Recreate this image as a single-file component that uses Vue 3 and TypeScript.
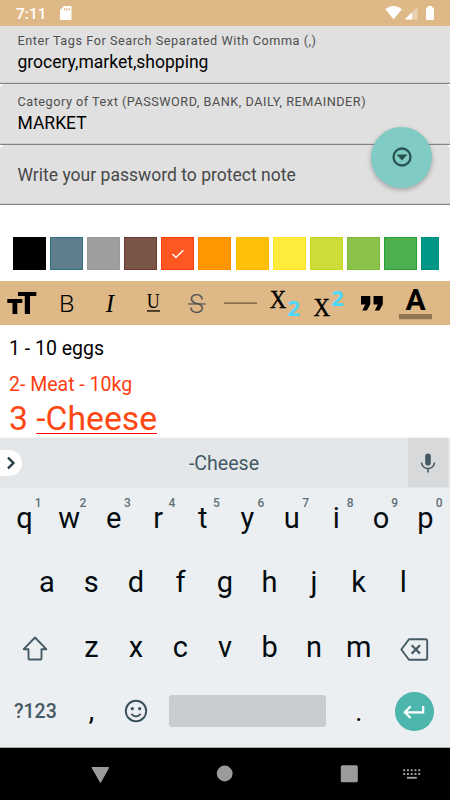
<script setup lang="ts">
interface Swatch { color: string; edge: string; selected?: boolean }

const swatches: Swatch[] = [
  { color: '#000000', edge: '#000000' },
  { color: '#607d8b', edge: '#2f6f82' },
  { color: '#9e9e9e', edge: '#989898' },
  { color: '#795548', edge: '#6b3a30' },
  { color: '#ff5722', edge: '#ff3a0c', selected: true },
  { color: '#ff9800', edge: '#ff8c00' },
  { color: '#ffc107', edge: '#ffb700' },
  { color: '#ffeb3b', edge: '#ffe524' },
  { color: '#cddc39', edge: '#c2d822' },
  { color: '#8bc34a', edge: '#7aba35' },
  { color: '#4caf50', edge: '#27a038' },
  { color: '#009688', edge: '#008c7c' },
]

const topRow = 'qwertyuiop'.split('').map((letter, i) => ({ letter, digit: (i + 1) % 10 }))
const homeRow = 'asdfghjkl'.split('')
const lowerRow = 'zxcvbnm'.split('')
</script>

<template>
  <div class="screen">
    <header class="status">
      <span class="clock">7:11</span>
      <svg class="sd" width="12" height="14" viewBox="0 0 12 14">
        <path fill="#fff" d="M4 0h6.2q1.3 0 1.3 1.3v11.4q0 1.3-1.3 1.3H1.3Q0 14 0 12.700V4z" />
        <path stroke="#deb887" stroke-width="1.100" d="M4.700 2v2.600M7 2v2.600M9.300 2v2.600" />
      </svg>
      <svg class="signals" width="50" height="14" viewBox="385 6 50 14">
        <path fill="#fff" d="M385.200 9.200Q393.500 2.800 402 9.200L393.600 19.300z" />
        <path fill="#fff" opacity=".35" d="M417.700 6.800v12.700h-12.900z" />
        <path fill="#fff" d="M412 12.300v7.200h-7.200z" />
        <path fill="#fff" d="M426 8.200q0-.8.800-.8H428V6h4v1.400h1.200q.8 0 .8.800v11q0 .8-.8.800h-6.400q-.8 0-.8-.8z" />
      </svg>
    </header>

    <section class="fields">
      <div class="field first">
        <label class="label tags">Enter Tags For Search Separated With Comma (,)</label>
        <div class="value">grocery,market,shopping</div>
      </div>
      <div class="field">
        <label class="label category">Category of Text (PASSWORD, BANK, DAILY, REMAINDER)</label>
        <div class="value market">MARKET</div>
      </div>
      <div class="field last">
        <div class="placeholder">Write your password to protect note</div>
      </div>
      <button class="fab" aria-label="Collapse">
        <svg width="22" height="22" viewBox="0 0 22 22">
          <circle cx="11" cy="11" r="8.500" fill="none" stroke="#28544f" stroke-width="2.300" />
          <path fill="#28544f" d="M5.500 8.600h11L11 14.600z" />
        </svg>
      </button>
    </section>

    <section class="palette">
      <div
        v-for="s in swatches"
        :key="s.color"
        class="swatch"
        :style="{ backgroundColor: s.color, borderColor: s.edge }"
      >
        <svg v-if="s.selected" width="14" height="12" viewBox="0 0 14 12">
          <path fill="none" stroke="#fff" stroke-width="1.400" d="M1.500 6L5 9.500L12.300 2.200" />
        </svg>
      </div>
    </section>

    <nav class="toolbar">
      <svg class="tool" viewBox="0 281 44 44">
        <path d="M18 292h18.300v4H30v18h-5.200v-18H18zM7.300 299h15v4h-5v11h-4.800v-11H7.300z" />
      </svg>
      <svg class="tool" viewBox="44 281 44 44">
        <text class="light" x="66.700" y="312" font-size="23" textLength="15.500" lengthAdjust="spacingAndGlyphs">B</text>
      </svg>
      <svg class="tool" viewBox="88 281 44 44">
        <text class="serif italic" x="110" y="311.700" font-size="25">I</text>
      </svg>
      <svg class="tool narrow" viewBox="132 281 43 44">
        <text class="serif" x="153.300" y="308.300" font-size="20" textLength="13" lengthAdjust="spacingAndGlyphs">U</text>
        <path d="M147 310.300h13v1.300h-13z" />
      </svg>
      <svg class="tool narrow muted" viewBox="175 281 43 44">
        <text class="light" x="196.300" y="312.500" font-size="25">S</text>
        <path d="M188 303.300h17.500v1.300H188z" />
      </svg>
      <svg class="tool" viewBox="218 281 44 44">
        <path fill="#6d5437" d="M224 302.500h33v1.300h-33z" />
      </svg>
      <svg class="tool" viewBox="262 281 44 44">
        <text class="serif bolder" x="278" y="307.500" font-size="26" textLength="16.500" lengthAdjust="spacingAndGlyphs">X</text>
        <text class="digit" x="293.700" y="316.200" font-size="22">2</text>
      </svg>
      <svg class="tool" viewBox="306 281 44 44">
        <text class="serif bolder" x="321.800" y="316.200" font-size="26" textLength="16.500" lengthAdjust="spacingAndGlyphs">X</text>
        <text class="digit" x="337.600" y="305.800" font-size="22">2</text>
      </svg>
      <svg class="tool" viewBox="350 281 44 44">
        <path d="M361 296h9.300v8.300l-3.500 6.300h-4.500l3-6H361zM373.500 296h9.300v8.300l-3.500 6.300h-4.500l3-6h-4.300z" />
      </svg>
      <svg class="tool" viewBox="394 281 44 44">
        <text class="bold" x="415.500" y="310.300" font-size="30">A</text>
        <path fill="#907750" d="M399 314h33v5.300h-33z" />
      </svg>
    </nav>

    <main class="editor">
      <p class="line">1 - 10 eggs</p>
      <p class="line second">2- Meat - 10kg</p>
      <p class="line big">3 <span class="under">-Cheese</span></p>
    </main>

    <section class="keyboard">
      <div class="suggestions">
        <div class="expand">
          <svg width="10" height="14" viewBox="0 0 10 14">
            <path fill="none" stroke="#263c46" stroke-width="2.400" d="M2 1.700L7.400 7L2 12.300" />
          </svg>
        </div>
        <span class="suggestion">-Cheese</span>
        <div class="mic">
          <svg width="16" height="20" viewBox="0 0 16 20">
            <rect x="5.200" y=".5" width="5.600" height="12" rx="2.800" fill="#455a64" />
            <path fill="none" stroke="#455a64" stroke-width="1.600" d="M1.500 9.500a6.500 6 0 0 0 13 0M8 15.500v4" />
          </svg>
        </div>
      </div>

      <div class="row r1">
        <div v-for="k in topRow" :key="k.letter" class="key">
          {{ k.letter }}<sup class="hint">{{ k.digit }}</sup>
        </div>
      </div>
      <div class="row r2">
        <div v-for="k in homeRow" :key="k" class="key">{{ k }}</div>
      </div>
      <div class="row r3">
        <div class="wide shift">
          <svg width="26" height="25" viewBox="0 0 26 25">
            <path fill="none" stroke="#455a64" stroke-width="1.900" stroke-linejoin="round" d="M13 1.500L24.300 13.200H19.500V22.600q0 .9-.9.900H7.400q-.9 0-.9-.9V13.200H1.700z" />
          </svg>
        </div>
        <div v-for="k in lowerRow" :key="k" class="key">{{ k }}</div>
        <div class="wide">
          <svg class="erase" width="29" height="23" viewBox="0 0 29 23">
            <path fill="none" stroke="#455a64" stroke-width="1.900" stroke-linejoin="round" d="M9 1.300h16.500q1.700 0 1.700 1.700v17q0 1.700-1.700 1.700H9L1.300 11.500z" />
            <path stroke="#455a64" stroke-width="2.200" d="M11.700 7.300l8.300 8.300M20 7.300l-8.300 8.300" />
          </svg>
        </div>
      </div>
      <div class="row r4">
        <div class="symbols">?123</div>
        <div class="comma">,</div>
        <div class="emoji">
          <svg width="24" height="24" viewBox="0 0 24 24">
            <circle cx="12" cy="12" r="10.200" fill="none" stroke="#37505b" stroke-width="1.900" />
            <circle cx="8.300" cy="9.700" r="1.600" fill="#37505b" />
            <circle cx="15.700" cy="9.700" r="1.600" fill="#37505b" />
            <path fill="none" stroke="#37505b" stroke-width="1.800" d="M7.300 14.800q4.700 5 9.400 0" />
          </svg>
        </div>
        <div class="space"></div>
        <div class="period">.</div>
        <div class="enter">
          <svg width="22" height="14" viewBox="0 0 22 14">
            <path fill="none" stroke="#fff" stroke-width="2.200" d="M20.200 1v6.300H2M7.600 1.300L1.800 7.200l5.800 5.800" />
          </svg>
        </div>
      </div>
    </section>

    <footer class="navbar">
      <svg width="450" height="52" viewBox="0 748 450 52" fill="#9b9b9b">
        <path stroke="#9b9b9b" stroke-linejoin="round" d="M92 767.500h16.700L100.500 782.500z" />
        <circle cx="224.700" cy="773.500" r="7.900" />
        <rect x="340.800" y="765.200" width="17" height="17" rx="1.500" />
        <path stroke="#9b9b9b" stroke-width="2" stroke-dasharray="2 1.750" d="M403.200 770.200h17.300M403.200 773.900h17.300" />
        <path d="M407 776.800h9.800v2H407z" />
      </svg>
    </footer>
  </div>
</template>

<style>
body { margin: 0; }
</style>

<style scoped>
.screen {
  width: 450px;
  height: 800px;
  display: flex;
  flex-direction: column;
  overflow: hidden;
  background: #fff;
  color: #000;
  font-family: Roboto, "Liberation Sans", sans-serif;
}
.screen * { box-sizing: border-box; }
svg { display: block; flex: none; }

.status {
  height: 26px;
  flex: none;
  display: flex;
  align-items: center;
  padding: 0 15px 0 16px;
  background: #deb887;
  color: #fff;
}
.clock { width: 43.500px; font-size: 15.500px; font-weight: 500; line-height: 20px; padding-top: 2px; }
.signals { margin-left: auto; }

.fields { position: relative; height: 179px; flex: none; display: flex; flex-direction: column; }
.field {
  height: 61px;
  padding: 10px 17.500px 0;
  background: #e0e0e0;
  border-bottom: 1px solid #848484;
  box-shadow: inset 0 -1px 0 #cecece;
  border-radius: 5px 5px 0 0;
}
.field.first { height: 58px; padding-top: 7px; border-radius: 0; }
.field.last { height: 60px; }
.label { display: block; font-size: 12.700px; line-height: 16px; color: #4f4f4f; white-space: nowrap; }
.label.tags { letter-spacing: .53px; }
.label.category { letter-spacing: .51px; }
.value { font-size: 17.500px; line-height: 22px; margin-top: 2px; }
.placeholder { font-size: 17.550px; line-height: 22px; padding-top: 9px; color: #484848; }
.fab {
  position: absolute;
  left: 371px;
  top: 101px;
  width: 61px;
  height: 61px;
  padding: 0;
  border: 0;
  border-radius: 50%;
  display: flex;
  align-items: center;
  justify-content: center;
  background: #80cbc4;
  box-shadow: 0 2px 5px rgba(0, 0, 0, .28);
}
.fab svg { margin-top: -1px; }

.palette {
  height: 76px;
  flex: none;
  display: flex;
  gap: 4.100px;
  margin: 0 11px 0 13px;
  padding-top: 32px;
  overflow: hidden;
}
.swatch {
  width: 33px;
  height: 33px;
  flex: none;
  border: 1px solid;
  display: flex;
  align-items: center;
  justify-content: center;
}

.toolbar { height: 44px; flex: none; display: flex; background: #deb887; }
.tool { width: 44px; height: 44px; overflow: visible; }
.narrow { width: 43px; }
.muted { fill: #555; }
.tool text { text-anchor: middle; }
.light { font-family: Roboto, sans-serif; font-weight: 300; }
.bold { font-family: Roboto, sans-serif; font-weight: 700; }
.italic { font-style: italic; }
.serif { font-family: "Liberation Serif", serif; }
.bolder { stroke: #000; stroke-width: .4px; }
.digit { font-family: "Noto Sans", sans-serif; font-weight: 700; fill: #4dd8ff; }

.editor { height: 113px; flex: none; padding: 12px 9px 0; }
.line { margin: 0; font-size: 19.500px; line-height: 24px; }
.second { margin-top: 12px; color: #ff3d10; }
.big { font-size: 33.700px; line-height: 40px; margin-top: 2px; color: #ff4712; white-space: nowrap; }
.under { text-decoration: underline; text-decoration-color: #f00; text-decoration-thickness: 1px; text-underline-offset: 3px; }

.keyboard { height: 310px; flex: none; background: #eceff1; border-bottom: 1px solid #a5aaad; }
.suggestions {
  height: 49px;
  display: flex;
  align-items: center;
  background: #e3e7e9;
  box-shadow: 0 0 2px rgba(0, 0, 0, .13);
  padding-right: 2px;
}
.expand {
  width: 22px;
  height: 26px;
  border-radius: 0 13px 13px 0;
  background: #fff;
  display: flex;
  align-items: center;
  padding-left: 6px;
}
.suggestion { flex: 1; padding-left: 18px; text-align: center; font-size: 19.600px; line-height: 24px; padding-top: 2px; color: #455a64; }
.mic { width: 40px; height: 49px; display: flex; align-items: center; justify-content: center; background: #d7d9da; }

.row { display: flex; align-items: center; justify-content: center; }
.r1 { height: 62px; }
.r2 { height: 66px; }
.r3 { height: 64px; }
.r4 { height: 64px; padding-left: 14px; justify-content: flex-start; }
.key { position: relative; width: 44.550px; text-align: center; font-size: 29px; line-height: 34px; color: #020b10; }
.hint {
  position: absolute;
  left: 32px;
  top: -5px;
  width: 8px;
  font-size: 12px;
  font-weight: 500;
  line-height: 14px;
  color: #5f7078;
}
.wide { width: 67px; display: flex; justify-content: center; }
.shift { padding: 2px 1px 0 0; }
.erase { margin: 5px 0 0; }
.symbols { width: 44px; font-size: 19.500px; font-weight: 500; line-height: 24px; padding-top: 1px; color: #455a64; }
.comma { width: 66px; padding-left: 1px; text-align: center; font-size: 27px; line-height: 34px; }
.emoji { width: 44.500px; }
.space { width: 157px; height: 32px; border-radius: 3px; background: #c8cdd0; }
.period { width: 69.500px; padding-right: 3px; text-align: center; font-size: 27px; line-height: 34px; padding-top: 1px; }
.enter {
  width: 38.500px;
  height: 38.500px;
  margin-top: 1px;
  border-radius: 50%;
  background: #4db6ac;
  display: flex;
  align-items: center;
  justify-content: center;
}

.navbar { height: 52px; flex: none; background: #000; }
</style>
